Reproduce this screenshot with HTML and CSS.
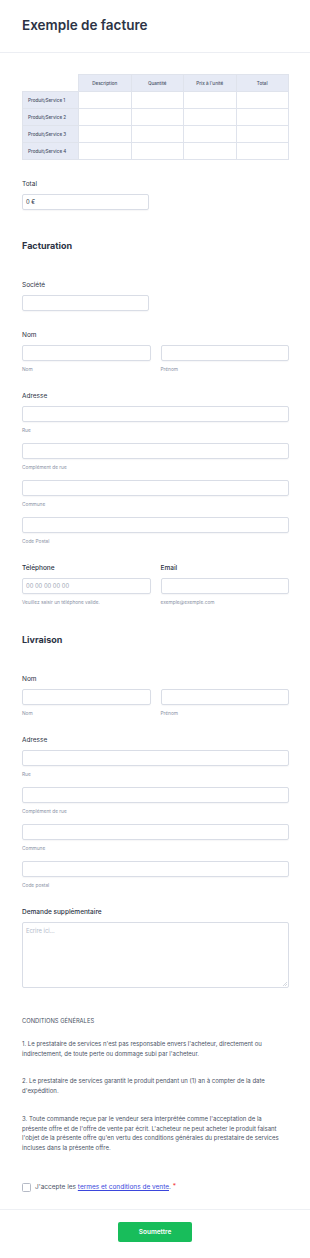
FILE: index.html
```html
<!DOCTYPE html>
<html lang="fr">
<head>
    <meta charset="UTF-8">
    <meta name="viewport" content="width=device-width, initial-scale=1.0">
    <title>Exemple de facture</title>
    <link rel="stylesheet" href="styles.css">
</head>
<body>
    <header class="header">
        <h1>Exemple de facture</h1>
    </header>
    <div class="content">
        <table class="products">
            <tr>
                <th class="corner"></th>
                <th>Description</th>
                <th>Quantité</th>
                <th>Prix à l'unité</th>
                <th>Total</th>
            </tr>
            <tr><th class="row-label">Produit/Service 1</th><td></td><td></td><td></td><td></td></tr>
            <tr><th class="row-label">Produit/Service 2</th><td></td><td></td><td></td><td></td></tr>
            <tr><th class="row-label">Produit/Service 3</th><td></td><td></td><td></td><td></td></tr>
            <tr><th class="row-label">Produit/Service 4</th><td></td><td></td><td></td><td></td></tr>
        </table>

        <div class="field field-total">
            <label>Total</label>
            <div class="input half">0 €</div>
        </div>

        <h2 class="section">Facturation</h2>

        <div class="field after-heading">
            <label>Société</label>
            <div class="input half"></div>
        </div>

        <div class="field">
            <label>Nom</label>
            <div class="cols">
                <div>
                    <div class="input"></div>
                    <span class="sub">Nom</span>
                </div>
                <div>
                    <div class="input"></div>
                    <span class="sub">Prénom</span>
                </div>
            </div>
        </div>

        <div class="field">
            <label>Adresse</label>
            <div class="input"></div>
            <span class="sub">Rue</span>
            <div class="input next"></div>
            <span class="sub">Complément de rue</span>
            <div class="input next"></div>
            <span class="sub">Commune</span>
            <div class="input next"></div>
            <span class="sub">Code Postal</span>
        </div>

        <div class="cols field">
            <div>
                <label class="strong">Téléphone</label>
                <div class="input placeholder">00 00 00 00 00</div>
                <span class="sub">Veuillez saisir un téléphone valide.</span>
            </div>
            <div>
                <label class="strong">Email</label>
                <div class="input"></div>
                <span class="sub">exemple@exemple.com</span>
            </div>
        </div>

        <h2 class="section">Livraison</h2>

        <div class="field after-heading">
            <label>Nom</label>
            <div class="cols">
                <div>
                    <div class="input"></div>
                    <span class="sub">Nom</span>
                </div>
                <div>
                    <div class="input"></div>
                    <span class="sub">Prénom</span>
                </div>
            </div>
        </div>

        <div class="field">
            <label>Adresse</label>
            <div class="input"></div>
            <span class="sub">Rue</span>
            <div class="input next"></div>
            <span class="sub">Complément de rue</span>
            <div class="input next"></div>
            <span class="sub">Commune</span>
            <div class="input next"></div>
            <span class="sub">Code postal</span>
        </div>

        <div class="field">
            <label class="strong">Demande supplémentaire</label>
            <div class="textarea">
                <span class="placeholder">Ecrire ici...</span>
                <svg class="grip" width="4" height="4" viewBox="0 0 4 4"><path d="M4 0L0 4M4 2L2 4" stroke="#b9bfcb" stroke-width="0.6"/></svg>
            </div>
        </div>

        <div class="terms">
            <p class="terms-title">CONDITIONS GÉNÉRALES</p>
            <p>1. Le prestataire de services n'est pas responsable envers l'acheteur, directement ou<br>indirectement, de toute perte ou dommage subi par l'acheteur.</p>
            <p>2. Le prestataire de services garantit le produit pendant un (1) an à compter de la date<br>d'expédition.</p>
            <p>3. Toute commande reçue par le vendeur sera interprétée comme l'acceptation de la<br>présente offre et de l'offre de vente par écrit. L'acheteur ne peut acheter le produit faisant<br>l'objet de la présente offre qu'en vertu des conditions générales du prestataire de services<br>incluses dans la présente offre.</p>
        </div>

        <div class="agree">
            <span class="checkbox"></span>
            <span>J'accepte les <a href="#">termes et conditions de vente</a>. <span class="req">*</span></span>
        </div>
    </div>
    <footer class="footer">
        <button class="submit">Soumettre</button>
    </footer>
</body>
</html>
```

FILE: styles.css
```css
body {
    margin: 0;
    font-family: Inter, "Noto Sans", sans-serif;
    color: #2c3345;
    background: #fff;
}
.header {
    padding: 16px 22px 18px;
    border-bottom: 1px solid #eceef3;
}
.header h1 {
    margin: 0;
    font-size: 13.5px;
    line-height: 18px;
    font-weight: 600;
}
.content {
    padding: 21px 21px 0 22px;
}
.products {
    width: 267px;
    border-collapse: collapse;
    table-layout: fixed;
}
.products th, .products td {
    height: 17px;
    padding: 0;
    border: 1px solid #dfe3ec;
    box-sizing: border-box;
}
.products th {
    background: #e6eaf5;
    font-size: 4.6px;
    font-weight: 500;
    color: #4a5268;
}
.products th.corner {
    width: 56px;
    background: none;
    border-top-color: transparent;
    border-left-color: transparent;
}
.products th.row-label {
    text-align: left;
    padding-left: 5px;
}
.field {
    margin-top: 20px;
}
.field label {
    display: block;
    font-size: 6.5px;
    line-height: 8px;
    margin-bottom: 6px;
}
.field label.strong {
    font-weight: 500;
}
.input {
    height: 16px;
    box-sizing: border-box;
    border: 1px solid #d9dde6;
    border-radius: 2px;
    font-size: 5.8px;
    line-height: 14px;
    padding-left: 3px;
    box-shadow: 0 1px 1px rgba(40, 50, 70, 0.04);
}
.input.half {
    width: 127px;
}
.input.next {
    margin-top: 10px;
}
.placeholder {
    color: #9aa2b3;
}
.sub {
    display: block;
    margin-top: 5px;
    font-size: 4.8px;
    line-height: 6px;
    color: #8a92a5;
}
.cols {
    display: grid;
    grid-template-columns: 1fr 1fr;
    column-gap: 10px;
}
.section {
    margin: 29.5px 0 0;
    font-size: 9px;
    line-height: 12px;
    font-weight: 700;
}
.field.after-heading {
    margin-top: 29px;
}
.textarea {
    position: relative;
    height: 66px;
    box-sizing: border-box;
    border: 1px solid #d9dde6;
    border-radius: 2px;
    padding: 4px 3px;
    font-size: 5.8px;
    line-height: 8px;
}
.textarea .placeholder {
    color: #b4bccb;
}
.grip {
    position: absolute;
    right: 1px;
    bottom: 1px;
}
.terms {
    margin-top: 27.5px;
    margin-right: -12px;
    font-size: 6px;
    line-height: 9.75px;
    color: #4b5366;
}
.terms p {
    margin: 18px 0 0;
}
.terms p.terms-title {
    margin: 0 0 -4.4px;
    font-size: 5.8px;
}
.agree {
    margin-top: 29.5px;
    display: flex;
    align-items: center;
    gap: 4px;
    height: 10px;
    font-size: 6.5px;
    color: #4b5366;
}
.checkbox {
    width: 9px;
    height: 9px;
    box-sizing: border-box;
    border: 1px solid #b5bac6;
    border-radius: 1.5px;
}
.agree a {
    color: #3b46dc;
}
.req {
    color: #f23a3c;
    position: relative;
    top: -1.5px;
}
.footer {
    margin-top: 17px;
    border-top: 1px solid #eef0f4;
    padding: 12px 0 17px;
    display: flex;
    justify-content: center;
}
.submit {
    width: 74px;
    height: 20px;
    border: none;
    border-radius: 2px;
    background: #18bd5b;
    color: #fff;
    font-family: Inter, sans-serif;
    font-size: 6.5px;
    font-weight: 600;
    cursor: pointer;
}
```
